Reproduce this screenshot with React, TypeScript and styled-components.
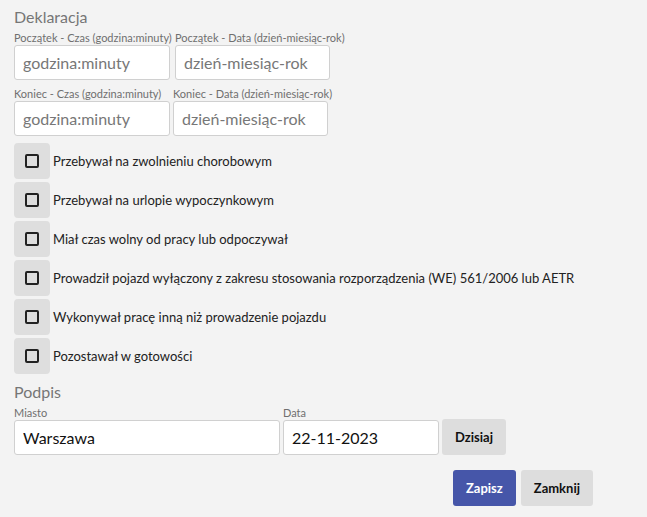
import React, { useState } from 'react';
import styled, { createGlobalStyle } from 'styled-components';

const GlobalStyle = createGlobalStyle`
  html, body {
    margin: 0;
    background: #f3f3f3;
    font-family: Lato, "Liberation Sans", sans-serif;
  }
`;

const Form = styled.div`
  width: 579px;
  padding: 7px 14px 10px;
  display: flex;
  flex-direction: column;
`;

const SectionTitle = styled.div<{ $gapTop?: number }>`
  font-size: 16px;
  line-height: 20px;
  color: #767676;
  margin-top: ${(p) => p.$gapTop || 0}px;
  margin-bottom: 4px;
`;

const FieldRow = styled.div<{ $gap: number }>`
  display: flex;
  gap: ${(p) => p.$gap}px;
  align-items: flex-end;
  margin-bottom: 7px;
`;

const Field = styled.div<{ $width: number }>`
  width: ${(p) => p.$width}px;
  display: flex;
  flex-direction: column;
`;

const Label = styled.label`
  font-size: 11px;
  line-height: 13px;
  color: #6f6f6f;
  white-space: nowrap;
  margin-bottom: 1px;
`;

const Input = styled.input`
  box-sizing: border-box;
  height: 35px;
  width: 100%;
  border: 1px solid #d0d0d0;
  border-radius: 3px;
  background: #fff;
  padding: 0 8px;
  font-family: Lato, "Liberation Sans", sans-serif;
  font-size: 16px;
  color: #111;
  outline: none;

  &::placeholder {
    color: #777;
  }
`;

const CheckList = styled.div`
  display: flex;
  flex-direction: column;
  gap: 3px;
`;

const CheckRow = styled.label`
  display: flex;
  align-items: center;
  gap: 3px;
  font-size: 13px;
  color: #222;
  cursor: pointer;
`;

const CheckBox = styled.span`
  width: 36px;
  height: 36px;
  border-radius: 4px;
  background: #dedede;
  display: flex;
  align-items: center;
  justify-content: center;
`;

const Tick = styled.span<{ $on: boolean }>`
  box-sizing: border-box;
  width: 14px;
  height: 14px;
  border: 2px solid #222;
  border-radius: 2px;
  background: ${(p) => (p.$on ? '#222' : 'transparent')};
`;

const Button = styled.button<{ $primary?: boolean }>`
  height: 36px;
  padding: 0 13px;
  border: none;
  border-radius: 3px;
  font-family: Lato, "Liberation Sans", sans-serif;
  font-weight: bold;
  font-size: 13px;
  background: ${(p) => (p.$primary ? '#4656a9' : '#dddddd')};
  color: ${(p) => (p.$primary ? '#fff' : '#111')};
  cursor: pointer;
`;

const Actions = styled.div`
  display: flex;
  justify-content: flex-end;
  gap: 5px;
  margin-top: 8px;
`;

const options = [
  'Przebywał na zwolnieniu chorobowym',
  'Przebywał na urlopie wypoczynkowym',
  'Miał czas wolny od pracy lub odpoczywał',
  'Prowadził pojazd wyłączony z zakresu stosowania rozporządzenia (WE) 561/2006 lub AETR',
  'Wykonywał pracę inną niż prowadzenie pojazdu',
  'Pozostawał w gotowości',
];

const App = () => {
  const [checked, setChecked] = useState<boolean[]>(options.map(() => false));
  const [city, setCity] = useState('Warszawa');
  const [date, setDate] = useState('22-11-2023');

  const toggle = (i: number) => {
    setChecked(checked.map((c, j) => (j === i ? !c : c)));
  };

  return (
    <>
      <GlobalStyle />
      <Form>
        <SectionTitle>Deklaracja</SectionTitle>
        <FieldRow $gap={5}>
          <Field $width={156}>
            <Label>Początek - Czas (godzina:minuty)</Label>
            <Input placeholder="godzina:minuty" />
          </Field>
          <Field $width={155}>
            <Label>Początek - Data (dzień-miesiąc-rok)</Label>
            <Input placeholder="dzień-miesiąc-rok" />
          </Field>
        </FieldRow>
        <FieldRow $gap={3}>
          <Field $width={156}>
            <Label>Koniec - Czas (godzina:minuty)</Label>
            <Input placeholder="godzina:minuty" />
          </Field>
          <Field $width={155}>
            <Label>Koniec - Data (dzień-miesiąc-rok)</Label>
            <Input placeholder="dzień-miesiąc-rok" />
          </Field>
        </FieldRow>
        <CheckList>
          {options.map((text, i) => (
            <CheckRow key={i} onClick={() => toggle(i)}>
              <CheckBox>
                <Tick $on={checked[i]} />
              </CheckBox>
              {text}
            </CheckRow>
          ))}
        </CheckList>
        <SectionTitle $gapTop={8}>Podpis</SectionTitle>
        <FieldRow $gap={3}>
          <Field $width={266}>
            <Label>Miasto</Label>
            <Input value={city} onChange={(e) => setCity(e.target.value)} />
          </Field>
          <Field $width={156}>
            <Label>Data</Label>
            <Input value={date} onChange={(e) => setDate(e.target.value)} />
          </Field>
          <Button>Dzisiaj</Button>
        </FieldRow>
        <Actions>
          <Button $primary>Zapisz</Button>
          <Button>Zamknij</Button>
        </Actions>
      </Form>
    </>
  );
};

export default App;
